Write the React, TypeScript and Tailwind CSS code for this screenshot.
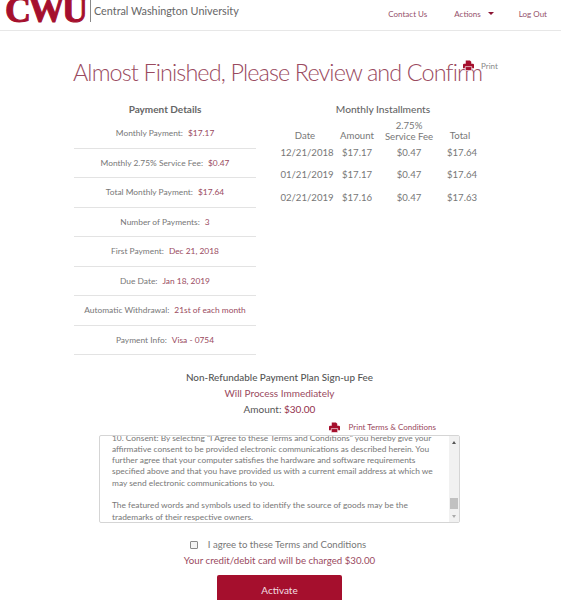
const details = [
  ["Monthly Payment:", "$17.17"],
  ["Monthly 2.75% Service Fee:", "$0.47"],
  ["Total Monthly Payment:", "$17.64"],
  ["Number of Payments:", "3"],
  ["First Payment:", "Dec 21, 2018"],
  ["Due Date:", "Jan 18, 2019"],
  ["Automatic Withdrawal:", "21st of each month"],
  ["Payment Info:", "Visa - 0754"],
];

const installments = [
  ["12/21/2018", "$17.17", "$0.47", "$17.64"],
  ["01/21/2019", "$17.17", "$0.47", "$17.64"],
  ["02/21/2019", "$17.16", "$0.47", "$17.63"],
];

const PrintIcon = () => (
  <svg width="11" height="11" viewBox="0 0 12 12" className="shrink-0">
    <path d="M3 0.5h4.5L9 2v2.5H3z" fill="#a50f2d" />
    <path d="M1.2 4h9.6A1.2 1.2 0 0 1 12 5.2V9H0V5.2A1.2 1.2 0 0 1 1.2 4z" fill="#a50f2d" />
    <path d="M2.5 7.2h7V11.5h-7z" fill="#a50f2d" stroke="#fff" strokeWidth="0.7" />
  </svg>
);

const App = () => {
  return (
    <div className="h-[600px] w-[561px] overflow-hidden bg-white font-['Lato','Noto_Sans',sans-serif] text-[#555]">
      <header className="flex h-[31px] items-center border-b border-[#e7e7e7]">
        <div className="ml-[5px] w-[80px] self-start">
          <div className="mt-[-8px] font-['Liberation_Serif',serif] text-[36px] leading-[36px] font-bold tracking-[-2.5px] whitespace-nowrap text-[#a50f2d] [-webkit-text-stroke:1px_#a50f2d]">
            CWU
          </div>
        </div>
        <div className="ml-[5px] h-[22px] w-px self-start bg-[#888]" />
        <div className="ml-[3px] mb-[7px] text-[10.8px] text-[#666]">Central Washington University</div>
        <nav className="ml-auto mb-[3px] flex items-center pr-[14px] text-[8px] text-[#94506a]">
          <span>Contact Us</span>
          <span className="ml-[27px]">Actions</span>
          <span className="ml-[7px] h-0 w-0 border-x-[3px] border-t-[3px] border-x-transparent border-t-[#8c1433]" />
          <span className="ml-[25px]">Log Out</span>
        </nav>
      </header>

      <main className="relative pt-[28px]">
        <h1 className="pl-[73px] text-[23.4px] leading-[26px] font-light tracking-[-0.88px] whitespace-nowrap text-[#9a4a60]">
          Almost Finished, Please Review and Confirm
        </h1>
        <div className="absolute top-[29px] left-[463px] flex items-start text-[8px] text-[#888]">
          <PrintIcon />
          <span className="ml-[7px] mt-[1px] leading-[10px]">Print</span>
        </div>

        <div className="mt-[18px] flex items-start pl-[74px]">
          <section className="w-[182px]">
            <h2 className="text-center text-[10px] leading-[13px] font-bold text-[#666]">Payment Details</h2>
            <div className="mt-[3px]">
              {details.map(([label, value]) => (
                <div
                  key={label}
                  className="flex h-[29.5px] items-center justify-center border-b border-[#e3e3e3] pt-[1px] text-[8.4px] whitespace-nowrap"
                >
                  <span className="text-[#777]">{label}</span>
                  <span className="ml-[5px] text-[#9a4a60]">{value}</span>
                </div>
              ))}
            </div>
          </section>

          <section className="ml-[24px] w-[206px]">
            <h2 className="text-center text-[10.2px] leading-[13px] font-medium text-[#666]">Monthly Installments</h2>
            <div className="grid grid-cols-[50px_54px_50px_52px] text-center text-[9.6px] text-[#777]">
              <div className="flex h-[26px] items-end justify-center leading-[12px]">Date</div>
              <div className="flex h-[26px] items-end justify-center leading-[12px]">Amount</div>
              <div className="h-[26px] pt-[4px] leading-[11px] whitespace-nowrap">
                2.75%
                <br />
                Service Fee
              </div>
              <div className="flex h-[26px] items-end justify-center leading-[12px]">Total</div>
            </div>
            <div className="mt-[3.5px]">
              {installments.map((row) => (
                <div
                  key={row[0]}
                  className="grid h-[22.5px] grid-cols-[54px_46px_58px_48px] items-start text-center text-[9.6px] leading-[14px] text-[#777]"
                >
                  {row.map((cell, i) => (
                    <span key={i}>{cell}</span>
                  ))}
                </div>
              ))}
            </div>
          </section>
        </div>

        <section className="mt-[14px] pr-[2px] text-center">
          <div className="text-[9.9px] leading-[16px] font-medium text-[#555]">Non-Refundable Payment Plan Sign-up Fee</div>
          <div className="text-[10px] leading-[16px] text-[#9a4a60]">Will Process Immediately</div>
          <div className="text-[10px] leading-[17px] text-[#555]">
            Amount: <span className="text-[#94304d]">$30.00</span>
          </div>
        </section>

        <div className="mt-[3px] flex items-center justify-end pr-[125px] text-[8px] leading-[12px] text-[#9a4a60]">
          <PrintIcon />
          <span className="ml-[9px]">Print Terms &amp; Conditions</span>
        </div>

        <div className="relative mt-[2px] ml-[99px] h-[88px] w-[361px] overflow-hidden rounded-[2px] border border-[#d5d5d5]">
          <div className="mt-[-3.5px] w-[340px] pl-[12px] text-[8.4px] leading-[11.3px] text-[#777]">
            <p>
              10. Consent: By selecting "I Agree to these Terms and Conditions" you hereby give your affirmative consent to be
              provided electronic communications as described herein. You further agree that your computer satisfies the
              hardware and software requirements specified above and that you have provided us with a current email address
              at which we may send electronic communications to you.
            </p>
            <p className="mt-[11.3px]">
              The featured words and symbols used to identify the source of goods may be the trademarks of their respective
              owners.
            </p>
          </div>
          <div className="absolute top-0 right-0 flex h-full w-[10px] flex-col items-center bg-[#f1f1f1]">
            <span className="mt-[5px] h-0 w-0 border-x-[2.5px] border-b-[3px] border-x-transparent border-b-[#555]" />
            <span className="mt-auto h-[11px] w-[8px] bg-[#c1c1c1]" />
            <span className="mt-[6px] mb-[4px] h-0 w-0 border-x-[2.5px] border-t-[3px] border-x-transparent border-t-[#aaa]" />
          </div>
        </div>

        <div className="mt-[14px] flex items-center justify-center pr-[5px] text-[9.6px] leading-[16px] text-[#777]">
          <span className="h-[8px] w-[8px] rounded-[1px] border border-[#8a8a8a] bg-[#f4f4f4]" />
          <span className="ml-[10px]">I agree to these Terms and Conditions</span>
        </div>
        <div className="pr-[2px] text-center text-[9.7px] leading-[14px] text-[#9a4a60]">Your credit/debit card will be charged $30.00</div>

        <button className="mt-[8px] ml-[217px] flex h-[30px] w-[125px] items-center justify-center rounded-[2px] bg-[#a50f2d] text-[10px] text-[#f3dfe3]">
          Activate
        </button>
      </main>
    </div>
  );
};

export default App;
